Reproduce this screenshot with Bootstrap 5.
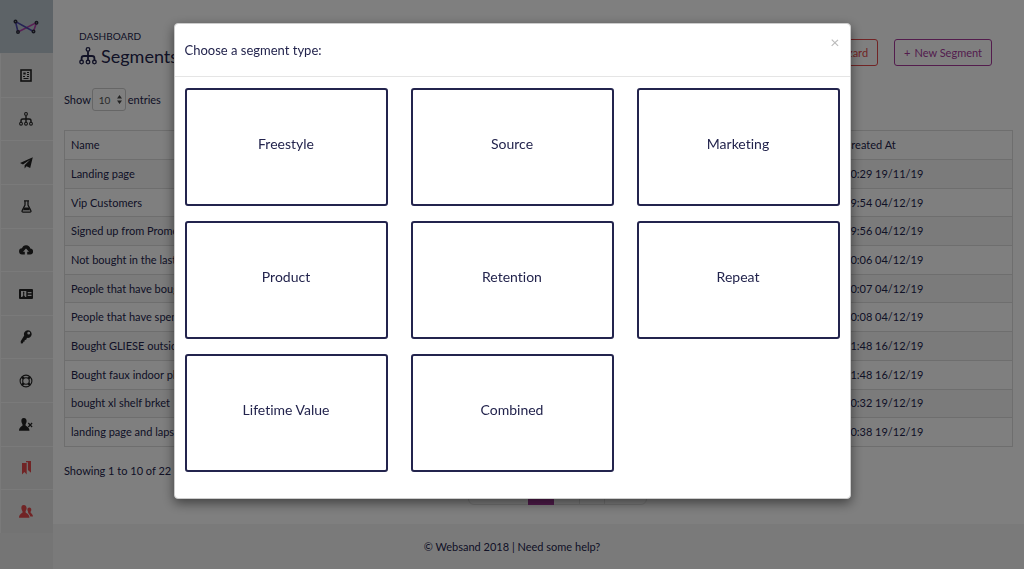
<!DOCTYPE html>
<html lang="en">
<head>
<meta charset="utf-8">
<meta name="viewport" content="width=device-width, initial-scale=1">
<title>Segments</title>
<link href="https://cdn.jsdelivr.net/npm/bootstrap@5.3.0/dist/css/bootstrap.min.css" rel="stylesheet">
<style>
  :root { --ink: #23244d; --line: #dcdcdc; --plum: #a6399b; --alert: #e2484b; }
  body { font-family: Lato, "Liberation Sans", sans-serif; font-size: 11px; line-height: 16px; color: var(--ink); background: #fff; overflow: hidden; }
  body, button { font-variant-ligatures: none; }
  .side { width: 53px; background: #ebebeb; }
  .side-logo { height: 53px; background: #bac7cf; padding-right: 1px; }
  .side-list { height: 480px; }
  .side-list li { flex: 1 1 0; min-height: 0; }
  .side-list a { color: #222; background: #e7e7e7; border-top: 1px solid #f4f4f4; border-left: 1px solid #f4f4f4; padding-right: 2px; }
  .side-list li:first-child a { border-top-color: #e7e7e7; }
  .side-list .hot { color: var(--alert); }
  .page-area { min-width: 0; }
  .page-head { padding: 28px 32px 0 26px; }
  .crumb { font-size: 10px; }
  h1 { font-size: 18px; line-height: 24px; font-weight: 400; }
  .head-actions { padding-top: 11px; }
  .btn-line { --bs-btn-font-size: 11px; --bs-btn-padding-y: 5px; --bs-btn-padding-x: 9px; --bs-btn-border-radius: 3px; line-height: 16px; height: 27px; }
  .btn-plum { color: var(--plum); border-color: var(--plum); }
  .btn-alert { color: var(--alert); border-color: var(--alert); }
  .list-area { padding: 20px 11px 0; }
  .size-box { margin: 0 2px 0 1px; }
  .page-size { width: 34px; height: 23px; padding: 0 6px; font-size: 10px; color: #555; border: 1px solid #ccc; border-radius: 3px; appearance: none; background: #fff; }
  .size-box svg { right: 4px; top: 7px; pointer-events: none; }
  .list-top { margin-bottom: 19px; }
  .seg-table { height: 317px; font-size: 11px; --bs-table-color: var(--ink); --bs-table-striped-color: var(--ink); --bs-table-striped-bg: #f6f6f6; color: var(--ink); border-color: var(--line); }
  .seg-table > :not(caption) > * > * { padding: 4px 6px; vertical-align: middle; }
  .seg-table th { font-weight: 400; height: 29px; }
  .seg-table .when { width: 175px; }
  .pagination { --bs-pagination-font-size: 11px; --bs-pagination-padding-x: 9px; --bs-pagination-padding-y: 4px; --bs-pagination-color: #777; --bs-pagination-active-bg: var(--plum); --bs-pagination-active-border-color: var(--plum); --bs-pagination-border-color: #e4e4e4; padding-left: 38px; }
  .foot { height: 45px; background: #f5f5f5; padding-right: 53px; }
  .foot a, .foot a:hover { color: inherit; }
  .type-dialog { max-width: 677px; margin: 23px auto; }
  .type-dialog .modal-content { border-radius: 4px; border-color: #ccc; background-clip: border-box; box-shadow: 0 4px 12px rgba(0,0,0,.5); color: var(--ink); }
  .type-dialog .modal-header { height: 53px; padding: 0 10px; border-color: #e5e5e5; }
  .type-dialog .modal-title { font-size: 13px; line-height: 20px; font-weight: 400; }
  .type-dialog .modal-body { padding: 11px 10px 26px; }
  .type-close { font-size: 16px; line-height: 16px; color: #bbb; margin-bottom: 16px; }
  .type-row { --bs-gutter-x: 23px; --bs-gutter-y: 15px; }
  .type-tile { height: 118px; border: 2px solid var(--ink); border-radius: 3px; background: #fff; color: var(--ink); font-size: 14px; line-height: 20px; padding-bottom: 8px; }
</style>
</head>
<body>
<svg class="d-none" aria-hidden="true">
  <symbol id="i-tree" viewBox="0 0 16 16"><g fill="none" stroke="currentColor" stroke-width="1.2"><circle cx="8" cy="2.2" r="1.6"/><circle cx="2.3" cy="13.4" r="1.6"/><circle cx="8" cy="13.4" r="1.6"/><circle cx="13.7" cy="13.4" r="1.6"/><path stroke-width="1.6" d="M8 4v7.500M2.300 11.500V10C2.300 8.500 3 8 4.500 8h7c1.500 0 2.200.5 2.200 2v1.500"/></g></symbol>
</svg>

<div class="d-flex min-vh-100">
  <nav class="side flex-shrink-0" aria-label="Main">
    <a href="#" class="side-logo d-flex align-items-center justify-content-center" aria-label="Websand">
      <svg width="26" height="16" viewBox="0 0 26 16" fill="none" stroke-width="1.6"><path stroke="#b13fa9" d="M5 13 23.500 3.500 20.500 12.500"/><path stroke="#4b46a8" d="M20.500 12.500 2.500 2.500 5 13"/><g fill="#8d97a0" stroke="#2b2b3b" stroke-width="1.400"><circle cx="2.500" cy="2.500" r="1.300"/><circle cx="5" cy="13" r="1.300"/><circle cx="20.500" cy="12.500" r="1.300"/><circle cx="23.500" cy="3.800" r="1.300"/></g></svg>
    </a>
    <ul class="side-list list-unstyled d-flex flex-column m-0">
      <li class="d-flex"><a href="#" class="d-flex flex-fill align-items-center justify-content-center" aria-label="Overview"><svg width="12" height="13" viewBox="0 0 12 13" fill="none" stroke="currentColor"><rect x="1" y="1" width="10" height="11" stroke-width="1.600"/><path stroke-width="2" d="M3.300 4.500h2.400"/><path d="M7 3.500h2M7 5.500h2M3 7.500h2M7 7.500h2M3.500 9.500h5"/></svg></a></li>
      <li class="d-flex"><a href="#" class="d-flex flex-fill align-items-center justify-content-center" aria-label="Segments"><svg width="14" height="14"><use href="#i-tree"/></svg></a></li>
      <li class="d-flex"><a href="#" class="d-flex flex-fill align-items-center justify-content-center" aria-label="Campaigns"><svg width="13" height="12" viewBox="0 0 13 12" fill="currentColor"><path d="M12.800.3 0 6l3 1.400L10.300 2.600 4.600 8.200V11.500L6.500 9.200l3.700 1.700z"/></svg></a></li>
      <li class="d-flex"><a href="#" class="d-flex flex-fill align-items-center justify-content-center" aria-label="Experiments"><svg width="11" height="13" viewBox="0 0 11 13" fill="none" stroke="currentColor" stroke-width="1.300"><path d="M3 .8h5M4 1v4L1.200 10.500c-.5 1 0 1.700 1 1.700h6.600c1 0 1.500-.7 1-1.700L7 5V1"/><path fill="currentColor" stroke="none" d="M3.300 7.500h4.400l1.300 2.700H2z"/></svg></a></li>
      <li class="d-flex"><a href="#" class="d-flex flex-fill align-items-center justify-content-center" aria-label="Import"><svg width="14" height="10" viewBox="0 0 14 10" fill="currentColor"><path d="M11.300 3.600A4.300 4.300 0 0 0 3 3.200 3.100 3.100 0 0 0 3.300 9.400H5.800V6.800H4L7 3.600l3 3.200H8.200V9.400h2.900a2.900 2.900 0 0 0 .2-5.800z"/></svg></a></li>
      <li class="d-flex"><a href="#" class="d-flex flex-fill align-items-center justify-content-center" aria-label="Contacts"><svg width="14" height="10" viewBox="0 0 14 10"><path fill="currentColor" fill-rule="evenodd" d="M1 0h12q1 0 1 1v8q0 1-1 1H1Q0 10 0 9V1Q0 0 1 0zM2 2v6h1.200l1-1.500V5Q3.600 2.600 4.700 2.600T5.200 5v1.500l1 1.500H7.300V2zM8.700 3v1.200h3.800V3zM8.700 5.700V7h3.800V5.700z"/></svg></a></li>
      <li class="d-flex"><a href="#" class="d-flex flex-fill align-items-center justify-content-center" aria-label="Keys"><svg width="12" height="14" viewBox="0 0 12 14" fill="currentColor" fill-rule="evenodd"><path d="M7.800.3a3.800 3.800 0 0 0-3.600 5.200L.7 11.200.9 13.600 3 13.300 3.300 11.800 4.600 11.500 4.700 10 6.200 9.700 7 7.800A3.800 3.800 0 1 0 7.800.3zM8.700 1.800a1.400 1.400 0 1 1 0 2.800 1.400 1.400 0 0 1 0-2.800z"/></svg></a></li>
      <li class="d-flex"><a href="#" class="d-flex flex-fill align-items-center justify-content-center" aria-label="Support"><svg width="14" height="14" viewBox="0 0 14 14" fill="none" stroke="currentColor"><circle cx="7" cy="7" r="5.900" stroke-width="1.100"/><circle cx="7" cy="7" r="3.300" stroke-width="1.100"/><path stroke-width="2.400" d="m2.800 2.800 1.900 1.900M11.200 2.800 9.300 4.700M2.800 11.200l1.900-1.900M11.200 11.200 9.300 9.300"/></svg></a></li>
      <li class="d-flex"><a href="#" class="d-flex flex-fill align-items-center justify-content-center" aria-label="Unsubscribed"><svg width="14" height="13" viewBox="0 0 14 13" fill="currentColor"><path d="M4.800 0C2.800 0 2.200 1.500 2.400 3.500 2.500 5 3.500 5.800 3.600 7c0 1.300-3.400 1.700-3.600 5.700h10.500C10.300 8.700 6.600 8.300 6.500 7c0-1.200 1-2 1.100-3.500C7.700 1.500 6.900 0 4.800 0z"/><path fill="none" stroke="currentColor" stroke-width="1.200" d="m9.300 5 3.800 4M13.100 5 9.300 9"/></svg></a></li>
      <li class="d-flex"><a href="#" class="hot d-flex flex-fill align-items-center justify-content-center" aria-label="Bookmarks"><svg width="9" height="14" viewBox="0 0 9 14" fill="currentColor"><path d="M0 2h4.700v11.500L2.400 11 0 13.500zM4 0h5v11.700L5.900 9V1.200H4z"/></svg></a></li>
      <li class="d-flex"><a href="#" class="hot d-flex flex-fill align-items-center justify-content-center" aria-label="People"><svg width="14" height="13" viewBox="0 0 14 13" fill="currentColor"><path d="M4.800 0C2.800 0 2.200 1.500 2.400 3.500 2.500 5 3.500 5.800 3.600 7c0 1.300-3.400 1.700-3.600 5.700h10.500C10.300 8.700 6.600 8.300 6.500 7c0-1.200 1-2 1.100-3.500C7.700 1.500 6.900 0 4.800 0z"/><path d="M10.300 2.500c-1.500 0-2.100 1.200-1.800 2.700.2 1 .6 1.200.6 2.300 0 .8 1.700 1.900 2.200 3.900H14c0-2.500-2.500-3-2.500-4.200 0-.8.700-1 .8-2.200.1-1.400-.5-2.500-2-2.500z"/></svg></a></li>
    </ul>
  </nav>

  <div class="page-area d-flex flex-column flex-fill">
    <header class="page-head d-flex justify-content-between">
      <div>
        <div class="crumb">DASHBOARD</div>
        <h1 class="d-flex align-items-center gap-1 m-0"><svg width="18" height="18"><use href="#i-tree"/></svg>Segments</h1>
      </div>
      <div class="head-actions d-flex gap-3">
        <button type="button" class="btn btn-line btn-alert">Wizard</button>
        <button type="button" class="btn btn-line btn-plum"><span class="me-1">+</span>New Segment</button>
      </div>
    </header>
    <main class="list-area flex-fill">
      <div class="list-top d-flex align-items-center">
        <label for="entries">Show</label>
        <span class="size-box position-relative d-flex">
          <select id="entries" class="page-size"><option>10</option><option>25</option></select>
          <svg class="position-absolute" width="5" height="9" viewBox="0 0 5 9" fill="#444"><path d="M2.500 0 5 3.500H0zM2.500 9 5 5.500H0z"/></svg>
        </span>
        <span>entries</span>
      </div>
      <table class="seg-table table table-bordered table-striped mb-3">
        <thead><tr><th>Name</th><th class="when">Created At</th></tr></thead>
        <tbody>
          <tr><td>Landing page</td><td>10:29 19/11/19</td></tr>
          <tr><td>Vip Customers</td><td>09:54 04/12/19</td></tr>
          <tr><td>Signed up from Promo</td><td>09:56 04/12/19</td></tr>
          <tr><td>Not bought in the last 30 days</td><td>10:06 04/12/19</td></tr>
          <tr><td>People that have bought</td><td>10:07 04/12/19</td></tr>
          <tr><td>People that have spent</td><td>10:08 04/12/19</td></tr>
          <tr><td>Bought GLIESE outside</td><td>11:48 16/12/19</td></tr>
          <tr><td>Bought faux indoor plant</td><td>11:48 16/12/19</td></tr>
          <tr><td>bought xl shelf brket</td><td>10:32 19/12/19</td></tr>
          <tr><td>landing page and lapsed</td><td>10:38 19/12/19</td></tr>
        </tbody>
      </table>
      <div>Showing 1 to 10 of 22 entries</div>
      <ul class="pagination justify-content-center mb-0">
        <li class="page-item"><a class="page-link" href="#">Previous</a></li>
        <li class="page-item active"><a class="page-link" href="#">1</a></li>
        <li class="page-item"><a class="page-link" href="#">2</a></li>
        <li class="page-item"><a class="page-link" href="#">3</a></li>
        <li class="page-item"><a class="page-link" href="#">Next</a></li>
      </ul>
    </main>
    <footer class="foot d-flex align-items-center justify-content-center"><span>© Websand 2018 | <a href="#" class="text-decoration-none">Need some help?</a></span></footer>
  </div>
</div>

<div class="modal-backdrop show"></div>
<div class="modal d-block" role="dialog" aria-modal="true" aria-labelledby="type-title">
  <div class="modal-dialog type-dialog">
    <div class="modal-content">
      <div class="modal-header">
        <h2 class="modal-title" id="type-title">Choose a segment type:</h2>
        <button type="button" class="type-close btn p-0 border-0" aria-label="Close">×</button>
      </div>
      <div class="modal-body">
        <div class="row row-cols-3 type-row">
          <div class="col"><button type="button" class="type-tile w-100">Freestyle</button></div>
          <div class="col"><button type="button" class="type-tile w-100">Source</button></div>
          <div class="col"><button type="button" class="type-tile w-100">Marketing</button></div>
          <div class="col"><button type="button" class="type-tile w-100">Product</button></div>
          <div class="col"><button type="button" class="type-tile w-100">Retention</button></div>
          <div class="col"><button type="button" class="type-tile w-100">Repeat</button></div>
          <div class="col"><button type="button" class="type-tile w-100">Lifetime Value</button></div>
          <div class="col"><button type="button" class="type-tile w-100">Combined</button></div>
        </div>
      </div>
    </div>
  </div>
</div>
<script src="https://cdn.jsdelivr.net/npm/bootstrap@5.3.0/dist/js/bootstrap.bundle.min.js"></script>
</body>
</html>
